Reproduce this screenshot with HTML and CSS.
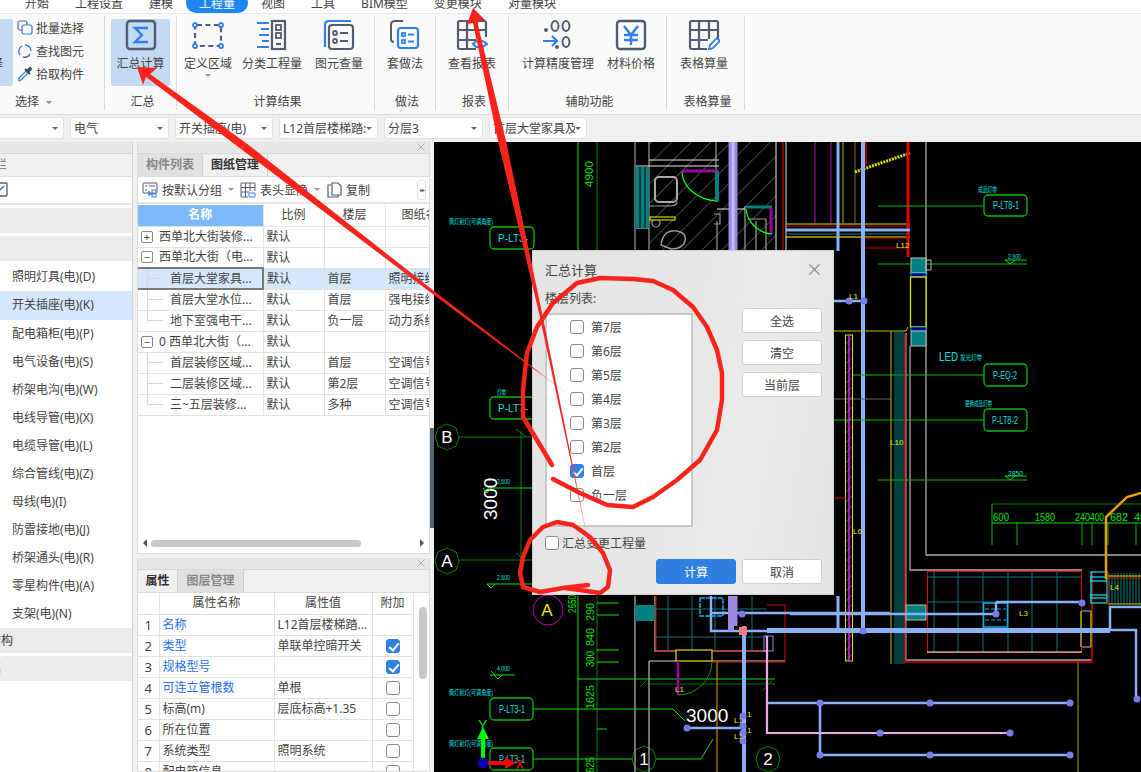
FILE: index.html
```html
<!DOCTYPE html>
<html lang="zh-CN">
<head>
<meta charset="utf-8">
<title>汇总计算</title>
<link rel="stylesheet" href="styles.css">
</head>
<body>
<div class="app">
  <nav class="tabs">
    <span class="tab">开始</span><span class="tab">工程设置</span><span class="tab">建模</span><span class="tab active">工程量</span><span class="tab">视图</span><span class="tab">工具</span><span class="tab">BIM模型</span><span class="tab">变更模块</span><span class="tab">对量模块</span>
  </nav>

  <section class="ribbon">
    <div class="group g-select">
      <div class="group-body">
        <div class="clip-btn"><span>择</span></div>
        <div class="small-list">
          <div class="small"><svg viewBox="0 0 16 16"><rect x="1" y="1" width="9" height="9" rx="2" fill="none" stroke="#5a6478" stroke-width="1.2"/><rect x="5" y="5" width="10" height="9" rx="2" fill="#fff" stroke="#2f80ed" stroke-width="1.2"/></svg>批量选择</div>
          <div class="small"><svg viewBox="0 0 16 16"><path d="M3 12A6 6 0 0 1 5 3M8 2a6 6 0 0 1 6 6" fill="none" stroke="#2f80ed" stroke-width="1.4"/><path d="M13 11a6 6 0 0 1-7 3" fill="none" stroke="#5a6478" stroke-width="1.4"/></svg>查找图元</div>
          <div class="small"><svg viewBox="0 0 16 16"><path d="M2 15l2-1 7-7-2-2-7 7z" fill="none" stroke="#2f80ed" stroke-width="1.2"/><path d="M8 3l5 5M10 5l3-3 1 1-3 3" fill="none" stroke="#3c4658" stroke-width="2"/></svg>拾取构件</div>
        </div>
      </div>
      <div class="group-label">选择<i class="caret label-caret"></i></div>
    </div>

    <div class="group g-sum">
      <div class="group-body">
        <div class="big selected w59">
          <svg class="icon" viewBox="0 0 32 32"><rect x="2" y="2" width="28" height="28" rx="3" fill="none" stroke="#525c70" stroke-width="2.4"/><path d="M23 9H10l7 7-7 7h13" fill="none" stroke="#2f80ed" stroke-width="2.4"/></svg>
          <span>汇总计算</span>
        </div>
      </div>
      <div class="group-label">汇总</div>
    </div>

    <div class="group g-result">
      <div class="group-body">
        <div class="big w60">
          <svg class="icon" viewBox="0 0 32 32"><rect x="3" y="6" width="26" height="21" rx="2" fill="none" stroke="#525c70" stroke-width="2.2" stroke-dasharray="5 3.4"/><g fill="#fff" stroke="#2f80ed" stroke-width="1.8"><circle cx="3" cy="6" r="2"/><circle cx="29" cy="6" r="2"/><circle cx="3" cy="27" r="2"/><circle cx="29" cy="27" r="2"/></g></svg>
          <span>定义区域</span><i class="caret big-caret"></i>
        </div>
        <div class="big w68">
          <svg class="icon" viewBox="0 0 32 32"><path d="M1 4h12M5 10h8M3 16h10M6 22h7M1 28h12" stroke="#2f80ed" stroke-width="2.2"/><rect x="16" y="2" width="13" height="28" fill="none" stroke="#525c70" stroke-width="2.2"/><g fill="none" stroke="#525c70" stroke-width="1.8"><rect x="20" y="6" width="5" height="5"/><rect x="20" y="14" width="5" height="5"/></g><path d="M20 25h5" stroke="#525c70" stroke-width="2.2"/></svg>
          <span>分类工程量</span>
        </div>
        <div class="big w66">
          <svg class="icon" viewBox="0 0 32 32"><path d="M2 28V6q0-4 4-4h22" fill="none" stroke="#2f80ed" stroke-width="2.2"/><rect x="6" y="6" width="24" height="24" rx="3" fill="none" stroke="#525c70" stroke-width="2.2"/><g fill="none" stroke="#525c70" stroke-width="1.8"><circle cx="12" cy="14" r="2"/><circle cx="12" cy="22" r="2"/><path d="M17 14h8M17 22h8"/></g></svg>
          <span>图元查量</span>
        </div>
      </div>
      <div class="group-label">计算结果</div>
    </div>

    <div class="group g-method">
      <div class="group-body">
        <div class="big w60">
          <svg class="icon" viewBox="0 0 32 32"><path d="M14 2H6Q2 2 2 6v14q0 3 3 3" fill="none" stroke="#525c70" stroke-width="2"/><rect x="9" y="9" width="20" height="20" rx="3" fill="none" stroke="#2f80ed" stroke-width="2.2"/><g fill="none" stroke="#2f80ed" stroke-width="1.8"><rect x="13" y="14" width="3" height="3"/><rect x="13" y="21" width="3" height="3"/><path d="M19 15.500h6M19 22.500h6"/></g></svg>
          <span>套做法</span>
        </div>
      </div>
      <div class="group-label">做法</div>
    </div>

    <div class="group g-report">
      <div class="group-body">
        <div class="big w60">
          <svg class="icon" viewBox="0 0 32 32"><path d="M20 30H4q-2 0-2-2V4q0-2 2-2h24q2 0 2 2v14M2 11h28M2 21h18M11 2v28M21 2v18" fill="none" stroke="#525c70" stroke-width="2.2"/><path d="M17 25q6-7 14 0q-8 7-14 0z" fill="#fff" stroke="#2f80ed" stroke-width="2"/></svg>
          <span>查看报表</span>
        </div>
      </div>
      <div class="group-label">报表</div>
    </div>

    <div class="group g-aux">
      <div class="group-body">
        <div class="big w86">
          <svg class="icon" viewBox="0 0 32 32"><g fill="none" stroke="#525c70" stroke-width="2"><ellipse cx="13" cy="7" rx="3.500" ry="5"/><ellipse cx="24" cy="7" rx="3.500" ry="5"/><ellipse cx="24" cy="23" rx="3.500" ry="5"/></g><circle cx="4" cy="11" r="2" fill="#525c70"/><circle cx="15" cy="28" r="2" fill="#525c70"/><path d="M1 22h14M10 17l5 5-5 5" fill="none" stroke="#2f80ed" stroke-width="2.200"/></svg>
          <span>计算精度管理</span>
        </div>
        <div class="big w60">
          <svg class="icon" viewBox="0 0 32 32"><rect x="2" y="2" width="28" height="28" rx="3" fill="none" stroke="#525c70" stroke-width="2.4"/><path d="M9 7l7 9 7-9M16 16v10M9 16h14M9 21h14" fill="none" stroke="#2f80ed" stroke-width="2.400"/></svg>
          <span>材料价格</span>
        </div>
      </div>
      <div class="group-label">辅助功能</div>
    </div>

    <div class="group g-table">
      <div class="group-body">
        <div class="big w60">
          <svg class="icon" viewBox="0 0 32 32"><path d="M19 30H4q-2 0-2-2V4q0-2 2-2h24q2 0 2 2v16M2 11h28M2 21h18M11 2v28M21 2v18" fill="none" stroke="#525c70" stroke-width="2.2"/><path d="M22 30l-1 0 1-4 7-7 3 3-7 7z" fill="#fff" stroke="#2f80ed" stroke-width="1.800"/></svg>
          <span>表格算量</span>
        </div>
      </div>
      <div class="group-label">表格算量</div>
    </div>
  </section>

  <section class="combos">
    <div class="combo c-first"><i class="caret"></i></div>
    <div class="combo"><span>电气</span><i class="caret"></i></div>
    <div class="combo"><span>开关插座(电)</span><i class="caret"></i></div>
    <div class="combo"><span>L12首层楼梯踏:</span><i class="caret"></i></div>
    <div class="combo"><span>分层3</span><i class="caret"></i></div>
    <div class="combo"><span>首层大堂家具及</span><i class="caret"></i></div>
  </section>

  <main class="main">
    <aside class="left">
      <div class="phead"></div>
      <div class="ltab"><span>导航栏</span></div>
      <div class="ltool"><svg width="8" height="15" viewBox="0 0 8 15"><path d="M-2 1h8q1 0 1 1v11q0 1-1 1h-8" fill="none" stroke="#525c70" stroke-width="1.300"/><path d="M0 8l4-4" stroke="#2f80ed" stroke-width="1.600"/></svg></div>
      <div class="lgroup"></div>
      <div class="lgroup"></div>
      <ul class="items">
        <li>照明灯具(电)(D)</li>
        <li class="sel">开关插座(电)(K)</li>
        <li>配电箱柜(电)(P)</li>
        <li>电气设备(电)(S)</li>
        <li>桥架电沟(电)(W)</li>
        <li>电线导管(电)(X)</li>
        <li>电缆导管(电)(L)</li>
        <li>综合管线(电)(Z)</li>
        <li>母线(电)(I)</li>
        <li>防雷接地(电)(J)</li>
        <li>桥架通头(电)(R)</li>
        <li>零星构件(电)(A)</li>
        <li>支架(电)(N)</li>
      </ul>
      <div class="lgroup lg2 lg3"><span>结构</span></div>
      <div class="lgroup lg2"><span>其</span></div>
    </aside>

    <div class="mid">
      <section class="panel panel-top">
        <div class="phead"><svg class="x" viewBox="0 0 8 8"><path d="M.5.500l7 7M7.500.500l-7 7" stroke="#aaa"/></svg></div>
        <div class="ptabs">
          <span class="ptab off w65">构件列表</span>
          <span class="ptab w65">图纸管理</span>
        </div>
        <div class="toolbar">
          <svg class="ti" viewBox="0 0 16 16"><rect x="1" y="1" width="14" height="10" rx="1" fill="none" stroke="#525c70"/><path d="M3 4h2M7 4h6M3 8h2" stroke="#525c70"/><path d="M7 9v5M7 12h4" stroke="#2f80ed" stroke-width="1.300"/><rect x="10" y="8" width="4" height="3" fill="#fff" stroke="#2f80ed"/><rect x="10" y="12" width="4" height="3" fill="#fff" stroke="#2f80ed"/></svg>
          <span>按默认分组</span><i class="caret t1"></i>
          <svg class="ti t2" viewBox="0 0 16 16"><path d="M1 1h14v8M1 1v14h7M1 5.500h14M1 10h8M5.500 1v14M10 1v8" fill="none" stroke="#525c70"/><path d="M9 11h6v4H9z" fill="#fff" stroke="#2f80ed"/></svg>
          <span>表头显隐</span><i class="caret t1"></i>
          <svg class="ti t2" viewBox="0 0 16 16"><path d="M5 3H2v12h10v-2" fill="none" stroke="#525c70" stroke-width="1.200"/><path d="M6 1h6l3 3v9H6z" fill="#fff" stroke="#525c70" stroke-width="1.200"/></svg>
          <span>复制</span>
          <span class="more">▸▸</span>
        </div>
        <div class="tbl-area">
          <table class="grid names">
            <colgroup><col class="cn1"><col class="cn2"><col class="cn2"><col class="cn2"></colgroup>
            <thead><tr><th class="hl">名称</th><th>比例</th><th>楼层</th><th class="clipcol">图纸名</th></tr></thead>
            <tbody>
              <tr><td class="root"><i class="tog">+</i>西单北大街装修...</td><td>默认</td><td></td><td></td></tr>
              <tr><td class="root"><i class="tog">−</i>西单北大街（电...</td><td>默认</td><td></td><td></td></tr>
              <tr class="cur"><td class="leaf focus">首层大堂家具...</td><td>默认</td><td>首层</td><td>照明接线</td></tr>
              <tr><td class="leaf">首层大堂水位...</td><td>默认</td><td>首层</td><td>强电接线</td></tr>
              <tr><td class="leaf last">地下室强电干...</td><td>默认</td><td>负一层</td><td>动力系统</td></tr>
              <tr><td class="root"><i class="tog">−</i>0 西单北大街（...</td><td>默认</td><td></td><td></td></tr>
              <tr><td class="leaf">首层装修区域...</td><td>默认</td><td>首层</td><td>空调信号</td></tr>
              <tr><td class="leaf">二层装修区域...</td><td>默认</td><td>第2层</td><td>空调信号</td></tr>
              <tr><td class="leaf last">三~五层装修...</td><td>默认</td><td>多种</td><td>空调信号</td></tr>
            </tbody>
          </table>
        </div>
        <div class="hscroll"><i class="arrow-l"></i><span class="thumb"></span><i class="arrow-r"></i></div>
      </section>

      <section class="panel panel-bot">
        <div class="phead"><svg class="x" viewBox="0 0 8 8"><path d="M.5.500l7 7M7.500.500l-7 7" stroke="#aaa"/></svg></div>
        <div class="ptabs">
          <span class="ptab w40">属性</span>
          <span class="ptab off w66">图层管理</span>
        </div>
        <div class="prop-wrap">
          <table class="grid props">
            <colgroup><col class="cp1"><col class="cp2"><col class="cp3"><col class="cp4"></colgroup>
            <thead><tr><th></th><th>属性名称</th><th>属性值</th><th>附加</th></tr></thead>
            <tbody>
              <tr><td class="num">1</td><td class="link">名称</td><td>L12首层楼梯踏...</td><td></td></tr>
              <tr><td class="num">2</td><td class="link">类型</td><td>单联单控暗开关</td><td class="cc"><i class="cb on"></i></td></tr>
              <tr><td class="num">3</td><td class="link">规格型号</td><td></td><td class="cc"><i class="cb on"></i></td></tr>
              <tr><td class="num">4</td><td class="link">可连立管根数</td><td>单根</td><td class="cc"><i class="cb"></i></td></tr>
              <tr><td class="num">5</td><td>标高(m)</td><td>层底标高+1.35</td><td class="cc"><i class="cb"></i></td></tr>
              <tr><td class="num">6</td><td>所在位置</td><td></td><td class="cc"><i class="cb"></i></td></tr>
              <tr><td class="num">7</td><td>系统类型</td><td>照明系统</td><td class="cc"><i class="cb"></i></td></tr>
              <tr><td class="num">8</td><td>配电箱信息</td><td></td><td class="cc"><i class="cb"></i></td></tr>
            </tbody>
          </table>
          <div class="vscroll"><span class="vthumb"></span></div>
        </div>
      </section>
    </div>

    <div class="canvas">
      <svg class="cad" width="707" height="631" viewBox="434 141 707 631">
        <defs>
          <pattern id="hatch" width="14" height="14" patternUnits="userSpaceOnUse" patternTransform="rotate(45)"><path d="M0 0V14" stroke="#8a8a8a" stroke-width="1"/></pattern>
          <pattern id="hatch2" width="7" height="7" patternUnits="userSpaceOnUse" patternTransform="rotate(45)"><path d="M0 0V7" stroke="#d050d0" stroke-width="1"/></pattern>
        </defs>
        <rect x="434" y="141" width="707" height="631" fill="#000"/>

        <!-- hatching and walls, upper middle -->
        <rect x="649" y="141" width="127" height="115" fill="url(#hatch)"/>
        <g fill="none" stroke="#9a9a9a" stroke-width="1.200">
          <path d="M635 141v115M649 141v115M716 141v60M717 220v30"/>
          <path d="M745 205v45M756 220v30M748 218h18v32"/>
          <rect x="655" y="176" width="22" height="25" rx="4" stroke="#aaa" stroke-width="2"/>
          <circle cx="656" cy="222" r="4"/>
          <path d="M661 244q2-16 16-14q10 2 8 10q-2 8-14 8z" stroke-width="1.400"/>
          <path d="M649 205h20q8 0 8-4M714 213h6v10h-6"/>
        </g>
        <path d="M649 159h70M649 165h70M636 165h13M636 227h13M717 208h28M776 141v110M786 141v110" stroke="#e8e8e8" fill="none"/>
        <rect x="635" y="166" width="14" height="61" fill="#008080"/>
        <path d="M640 166v61M645 166v61" stroke="#000"/>
        <rect x="650" y="216" width="25" height="3" fill="#000" stroke="#ff0"/>
        <path d="M783 141v110" stroke="#f00"/>
        <g fill="none" stroke="#0f0">
          <path d="M682 170a38 30 0 0 0 36 30" stroke-width="1.300"/>
          <path d="M746 208a28 28 0 0 0 26 25" stroke-width="1.300"/>
        </g>
        <path d="M682 170h36" stroke="#a000a0" stroke-width="3"/>
        <path d="M717 170v30" stroke="#008080" stroke-width="4"/>
        <path d="M746 206h26" stroke="#008080" stroke-width="3"/>
        <path d="M771 207v25" stroke="#a000a0" stroke-width="3"/>

        <!-- dimension lines left -->
        <g stroke="#00e000" fill="none">
          <path d="M578 141v109M578 595v177"/>
        </g>
        <g stroke="#008000" fill="none">
          <path d="M597 141v109M597 595v177"/>
          <path d="M459 436h73M459 559h73M521 430v135"/>
          <path d="M516 428l10 8M516 552l10 8"/>
        </g>
        <g stroke="#00e000" fill="none">
          <path d="M487 487h45M487 583h45M490 674h25M495 674l-4-4M578 678h197M490 708h183l12 12M533 758h168l12-20"/>
          <path d="M597 602h22M597 614h22M597 649h22M597 661h22M597 728h10"/>
        </g>
        <path d="M648 683h127M640 686l10-10M762 690l10-10" stroke="#007000" fill="none"/>

        <g lengthAdjust="spacingAndGlyphs">
        <text class="t-g" transform="translate(593 186) rotate(-90)" textLength="26" lengthAdjust="spacingAndGlyphs">4900</text>
        <text class="t-g" transform="translate(576 612) rotate(-90)" textLength="18" lengthAdjust="spacingAndGlyphs">2650</text>
        <text class="t-g" transform="translate(594 620) rotate(-90)" textLength="18" lengthAdjust="spacingAndGlyphs">290</text>
        <text class="t-g" transform="translate(594 645) rotate(-90)" textLength="18" lengthAdjust="spacingAndGlyphs">840</text>
        <text class="t-g" transform="translate(594 666) rotate(-90)" textLength="16" lengthAdjust="spacingAndGlyphs">300</text>
        <text class="t-g" transform="translate(594 708) rotate(-90)" textLength="24" lengthAdjust="spacingAndGlyphs">1625</text>
        <text class="t-g" transform="translate(594 772) rotate(-90)" textLength="16" lengthAdjust="spacingAndGlyphs">625</text>
        </g>
        <text class="t-w big-t" transform="translate(497 519) rotate(-90)">3000</text>
        <text class="t-w big-t" x="686" y="721">3000</text>

        <!-- grid axis bubbles -->
        <g fill="#000" stroke="#008000">
          <polygon points="447,423 456,427 459,436 456,445 447,449 438,445 435,436 438,427"/>
          <polygon points="447,547 456,551 459,560 456,569 447,573 438,569 435,560 438,551"/>
          <polygon points="644,745 653,749 656,758 653,767 644,771 635,767 632,758 635,749"/>
          <polygon points="768,745 777,749 780,758 777,767 768,771 759,767 756,758 759,749"/>
        </g>
        <text class="t-w axis" x="447" y="442">B</text>
        <text class="t-w axis" x="447" y="566">A</text>
        <text class="t-w axis" x="644" y="764">1</text>
        <text class="t-w axis" x="768" y="764">2</text>
        <circle cx="548" cy="609" r="15" fill="#000" stroke="#c000c0"/>
        <text class="t-y axis" x="547" y="615">A</text>

        <!-- tags -->
        <g fill="#000" stroke="#00c000" stroke-width="1.300">
          <rect x="490" y="226" width="44" height="22" rx="4"/>
          <rect x="490" y="396" width="44" height="22" rx="4"/>
          <rect x="490" y="697" width="43" height="22" rx="4"/>
          <rect x="490" y="747" width="43" height="22" rx="4"/>
          <rect x="984" y="194" width="43" height="21" rx="4"/>
          <rect x="984" y="363" width="43" height="22" rx="4"/>
          <rect x="984" y="408" width="43" height="22" rx="4"/>
        </g>
        <g class="t-c">
          <text x="498" y="241" textLength="30" lengthAdjust="spacingAndGlyphs">P-LT3-</text>
          <text x="498" y="411" textLength="30" lengthAdjust="spacingAndGlyphs">P-LT7-</text>
          <text x="499" y="712" textLength="26" lengthAdjust="spacingAndGlyphs">P-LT3-1</text>
          <text x="499" y="762" textLength="26" lengthAdjust="spacingAndGlyphs">P-LT3-1</text>
          <text x="993" y="208" textLength="26" lengthAdjust="spacingAndGlyphs">P-LT8-1</text>
          <text x="993" y="378" textLength="24" lengthAdjust="spacingAndGlyphs">P-EQ-2</text>
          <text x="992" y="423" textLength="26" lengthAdjust="spacingAndGlyphs">P-LT8-2</text>
        </g>
        <g class="t-c tiny">
          <text x="449" y="223" textLength="44" lengthAdjust="spacingAndGlyphs">筒灯射灯(可调角度)</text>
          <text x="497" y="394" textLength="9" lengthAdjust="spacingAndGlyphs">灯带</text>
          <text x="449" y="694" textLength="44" lengthAdjust="spacingAndGlyphs">筒灯射灯(可调角度)</text>
          <text x="449" y="745" textLength="44" lengthAdjust="spacingAndGlyphs">筒灯射灯(可调角度)</text>
          <text x="978" y="191" textLength="19" lengthAdjust="spacingAndGlyphs">成品灯带</text>
          <text x="965" y="405" textLength="27" lengthAdjust="spacingAndGlyphs">更换成品灯带</text>
          <text x="960" y="359" textLength="22" lengthAdjust="spacingAndGlyphs">发光灯带</text>
          <text x="1008" y="258" textLength="13" lengthAdjust="spacingAndGlyphs">2.900</text>
          <text x="497" y="483" textLength="13" lengthAdjust="spacingAndGlyphs">2.600</text>
          <text x="497" y="579" textLength="13" lengthAdjust="spacingAndGlyphs">2.600</text>
          <text x="497" y="670" textLength="13" lengthAdjust="spacingAndGlyphs">4.000</text>
          <text x="1008" y="475" textLength="15" lengthAdjust="spacingAndGlyphs">2850</text>
        </g>
        <text class="t-c led" x="939" y="360" textLength="19" lengthAdjust="spacingAndGlyphs">LED</text>
        <path d="M1005 259h22M1005 259l5 4 5-4M483 487l4 5 4-5M487 583l4 4 4-4M494 674l4 4 4-4M1005 475h22M1005 475l5 4 5-4" fill="none" stroke="#00e000"/>

        <!-- right column verticals -->
        <path d="M815 141v83M831 141v83" stroke="#c000c0"/>
        <path d="M855 141v83" stroke="#7a7a00"/>
        <path d="M843 141v83" stroke="#b0b000"/>
        <path d="M866 141v24" stroke="#c00000" stroke-width="1.500"/>
        <path d="M855 171l55-19" stroke="#e0e000" stroke-width="3" stroke-dasharray="2 1"/>
        <path d="M786 223h124" stroke="#909000" stroke-width="1.500"/>
        <path d="M786 225h124" stroke="#c00000"/>
        <path d="M786 233h124" stroke="#008080"/>
        <path d="M786 236h124" stroke="#ff0"/>
        <path d="M861 237h49M861 247h45M861 237v10" stroke="#d00000" fill="none"/>
        <path d="M908 141v115" stroke="#e00000" stroke-width="3"/>
        <path d="M926 141v413H1141M910 345v224H1082M926 141" stroke="#aaa" stroke-width="1.300" fill="none"/>
        <text class="t-y lbl" x="896" y="247">L12</text>
        <path d="M786 229h124" stroke="#8ab0f8" stroke-width="3"/>
        <path d="M838 141v109M838 595v34" stroke="#8ab0f8" stroke-width="3"/>
        <path d="M863 141v489" stroke="#8ab0f8" stroke-width="4"/>
        <path d="M834 300h32" stroke="#8ab0f8" stroke-width="2.500"/>
        <circle cx="849" cy="300" r="3.500" fill="#7a7ae8"/>
        <circle cx="864" cy="300" r="3.500" fill="#7a7ae8"/>
        <text class="t-y lbl" x="849" y="298">L1</text>

        <path d="M878 205h106M878 263h149M852 374h132M834 419h150M878 479h149" stroke="#00c000" fill="none"/>

        <!-- teal blocks and window -->
        <rect x="911" y="257" width="15" height="15" fill="#008080" stroke="#bbb"/>
        <rect x="926" y="259" width="5" height="10" fill="none" stroke="#bbb"/>
        <rect x="911" y="272" width="15" height="4" fill="#000090" stroke="#0ff" stroke-width=".5"/>
        <rect x="910.500" y="276" width="15.500" height="50" fill="#000" stroke="#e0e000" stroke-width="1.300"/>
        <rect x="911" y="326" width="15" height="4" fill="#000090" stroke="#0ff" stroke-width=".5"/>
        <rect x="911" y="330" width="15" height="15" fill="#008080" stroke="#bbb"/>
        <path d="M834 330h72l2-4" stroke="#c0c000" fill="none"/>
        <path d="M834 398h57" stroke="#666"/>
        <path d="M891 330v333" stroke="#c0c000"/>
        <path d="M895 330v333M897 330v333M899 330v333M901 330v333M903 330v333" stroke="#008080"/>
        <path d="M904.500 332v331" stroke="#c00000" stroke-width="1.500"/>
        <path d="M906 332v328" stroke="#999" stroke-width="1.200"/>
        <rect x="845.500" y="334" width="7" height="326" fill="url(#hatch2)" stroke="#e0e000"/>
        <path d="M849 334v326" stroke="#ff30ff" stroke-width="1.300"/>
        <text class="t-y lbl" x="853" y="533">L6</text>
        <text class="t-y lbl" x="890" y="444">L10</text>
        <path d="M834 497h12" stroke="#d00000"/>

        <!-- lower right room -->
        <path d="M905 661H1092V570" stroke="#d00000" fill="none" stroke-width="1.500"/>
        <path d="M907 659H1091" stroke="#aaa" fill="none" stroke-width="1.300"/>
        <g stroke="#107070" fill="none">
          <path d="M934 571v80M958 571v80M983 571v80M1008 571v80M1032 571v80M1057 571v80M927 576h155M927 601h155M927 631h155"/>
        </g>
        <rect x="927.500" y="570.500" width="154" height="81" fill="none" stroke="#e00000"/>
        <path d="M927 651h155" stroke="#eee"/>
        <rect x="983.500" y="602" width="24" height="24" fill="none" stroke="#00b0e8" stroke-width="1.500"/>
        <path d="M985 608h21M985 619h21" stroke="#00b0e8" stroke-dasharray="4 2"/>
        <rect x="906" y="604" width="20" height="15" fill="#008080" stroke="#bbb"/>
        <path d="M1082 610h9v36h-9" fill="none" stroke="#bbb"/>
        <path d="M1081 610v36M1091 610v36" stroke="#8a8a00" stroke-width="2"/>
        <g fill="none" stroke="#00d8e8" stroke-width="1.300">
          <rect x="1091" y="571" width="16" height="31"/>
          <rect x="1091" y="576" width="16" height="4"/>
          <rect x="1091" y="594" width="16" height="3"/>
        </g>
        <path d="M1109 572v31M1112 572v31M1115 572v31M1118 572v31M1121 572v31M1124 572v31M1127 572v31M1130 572v31M1133 572v31M1136 572v31M1139 572v31" stroke="#008080"/>
        <path d="M1108 577h33" stroke="#e00000"/><path d="M1108 603h33M1108 575h33" stroke="#d0d000"/>
        <path d="M1108 570v33" stroke="#d00000"/>
        <text class="t-y lbl" x="1110" y="589">L4</text>
        <text class="t-y lbl" x="1019" y="615">L3</text>

        <path d="M992 503H1141" stroke="#008000"/>
        <path d="M992 522H1141" stroke="#00e000"/>
        <path d="M992 503v41M1017 521v23M1082 521v23M1092 521v23M1108 521v23M1136 521v23" stroke="#00b000"/>
        <g class="t-g dim">
          <text x="993" y="520" textLength="16" lengthAdjust="spacingAndGlyphs">600</text>
          <text x="1035" y="520" textLength="20" lengthAdjust="spacingAndGlyphs">1580</text>
          <text x="1075" y="520" textLength="15" lengthAdjust="spacingAndGlyphs">240</text>
          <text x="1090" y="520" textLength="14" lengthAdjust="spacingAndGlyphs">400</text>
          <text x="1110" y="520" textLength="18" lengthAdjust="spacingAndGlyphs">682</text>
          <text x="1134" y="520">45</text>
        </g>
        <path d="M1106 578v-62l21-20 14-4" stroke="#e8a000" stroke-width="2.500" fill="none"/>

        <!-- lower-middle room -->
        <path d="M635 595v177M655 595v55H767M649 660v112" stroke="#aaa" stroke-width="1.300" fill="none"/>
        <path d="M649 660h27M712 660h73" stroke="#ccc" fill="none"/>
        <rect x="635" y="604" width="20" height="16" fill="#008080"/>
        <path d="M656 595v55h110M767 604h18v57H712" fill="none" stroke="#e00000"/>
        <path d="M656 608h110M656 636h110M668 595v55M692 595v55M715 595v55M752 595v55" stroke="#107070" fill="none"/>
        <rect x="676" y="649" width="36" height="11" fill="#000" stroke="#d0d000" stroke-width="1.300"/>
        <path d="M678 660v34" stroke="#a000a0" stroke-width="2.500"/>
        <path d="M678 694a34 34 0 0 0 34-34" stroke="#00a000" fill="none"/>
        <path d="M717 660v112" stroke="#e8a000"/>
        <path d="M1078 661v111" stroke="#a0a000"/>
        <text class="t-y lbl" x="675" y="691">L1</text>
        <rect x="700" y="597" width="23" height="18" fill="none" stroke="#00b0e8" stroke-width="1.500" stroke-dasharray="5 1"/>

        <!-- blue routes -->
        <g fill="none" stroke="#8ab0f8">
          <path d="M711 595v35h160M712 612h178" stroke-width="2.500"/>
          <path d="M744 625v147" stroke-width="4"/>
          <path d="M687 727h56" stroke-width="2.500"/>
          <path d="M790 613h206M996 601h86M996 601v12" stroke-width="2.500"/>
          <path d="M767 629H1110V606H1141M1110 629h26v69" stroke-width="2.500"/>
          <path d="M767 629.500h343" stroke-width="5"/>
          <path d="M767 702h303M820 702v52h250" stroke-width="2.500"/>
        </g>
        <path d="M731 595v35" stroke="#9c88e0" stroke-width="6"/>
        <path d="M733 141v109M733 595v30" stroke="#9c88e0" stroke-width="9"/>
        <path d="M733 141v109" stroke="#c8bcf4" stroke-width="3"/>
        <rect x="739" y="626" width="8" height="8" fill="#ff7a7a"/>
        <rect x="764" y="635" width="9" height="15" fill="none" stroke="#9c88e0"/>
        <path d="M767 635v97h243" fill="none" stroke="#f0a8e8" stroke-width="2.200"/>
        <g fill="#7a7ae8">
          <circle cx="687" cy="727" r="3.500"/>
          <circle cx="743" cy="715" r="3.500"/><circle cx="743" cy="725" r="3.500"/><circle cx="743" cy="732" r="3.500"/><circle cx="743" cy="740" r="3.500"/>
          <circle cx="742" cy="613" r="3.500"/><circle cx="863" cy="630" r="3.500"/>
          <circle cx="996" cy="613" r="3.500"/><circle cx="1082" cy="602" r="3.500"/><circle cx="1137" cy="698" r="3.500"/>
          <circle cx="820" cy="702" r="3.500"/><circle cx="930" cy="702" r="3.500"/><circle cx="1070" cy="702" r="3.500"/>
          <circle cx="820" cy="754" r="3.500"/><circle cx="930" cy="754" r="3.500"/><circle cx="1070" cy="754" r="3.500"/>
          <circle cx="880" cy="732" r="3.500"/><circle cx="1010" cy="732" r="3.500"/>
        </g>
        <g class="t-y lbl">
          <text x="734" y="722">L1</text><text x="734" y="738">L1</text><text x="747" y="716">1</text><text x="747" y="732">1</text>
        </g>

        <!-- UCS axes -->
        <path d="M483 760v-30" stroke="#0f0" stroke-width="4"/>
        <path d="M477 738l6-12 6 12z" fill="#0f0"/>
        <text class="t-g ucs" x="478" y="729">Y</text>
        <path d="M488 762h20" stroke="#f00" stroke-width="4"/>
        <path d="M505 756l11 6-11 6z" fill="#f00"/>
        <circle cx="483" cy="762" r="5.500" fill="#0000b0"/>
        <text class="t-r ucs" x="515" y="768">X</text>
      </svg>
    </div>
  </main>

  <div class="handle"></div>

  <div class="dialog">
    <div class="dlg-title"><span>汇总计算</span><svg class="dlg-x" viewBox="0 0 11 11"><path d="M.5.500l10 10M10.500.500l-10 10" stroke="#8a8a8a" stroke-width="1.100"/></svg></div>
    <div class="dlg-sub">楼层列表:</div>
    <div class="dlg-body">
      <div class="floors">
        <label class="floor"><i class="cb"></i>第7层</label>
        <label class="floor"><i class="cb"></i>第6层</label>
        <label class="floor"><i class="cb"></i>第5层</label>
        <label class="floor"><i class="cb"></i>第4层</label>
        <label class="floor"><i class="cb"></i>第3层</label>
        <label class="floor"><i class="cb"></i>第2层</label>
        <label class="floor"><i class="cb on"></i>首层</label>
        <label class="floor"><i class="cb"></i>负一层</label>
      </div>
      <div class="dlg-side">
        <button class="btn">全选</button>
        <button class="btn">清空</button>
        <button class="btn">当前层</button>
      </div>
    </div>
    <label class="dlg-check"><i class="cb"></i>汇总变更工程量</label>
    <div class="dlg-foot">
      <button class="btn primary">计算</button>
      <button class="btn">取消</button>
    </div>
  </div>

  <svg class="marks" width="1141" height="772" viewBox="0 0 1141 772">
    <defs>
      <linearGradient id="fadeA" gradientUnits="userSpaceOnUse" x1="434" y1="293" x2="578" y2="402">
        <stop offset="0" stop-color="#f8241c"/><stop offset=".68" stop-color="#f8241c"/><stop offset=".78" stop-color="#f8a0a0"/><stop offset="1" stop-color="#f8c8c8" stop-opacity=".3"/>
      </linearGradient>
      <linearGradient id="fadeB" gradientUnits="userSpaceOnUse" x1="541" y1="313" x2="592" y2="565">
        <stop offset="0" stop-color="#f8241c"/><stop offset=".55" stop-color="#f8241c"/><stop offset=".8" stop-color="#f87a70"/><stop offset="1" stop-color="#f0c0b8" stop-opacity=".3"/>
      </linearGradient>
    </defs>
    <polygon points="137,67 157,68 150,74 246,143 241,149 146,77 143,85" fill="#f8241c"/>
    <polygon points="246,143 434,291 434,295 241,149" fill="#f8241c"/>
    <polygon points="434,291 578,402 434,295" fill="url(#fadeA)"/>
    <polygon points="473,8 485,20 477,21 506,141 498,141 473,23 467,24" fill="#f8241c"/>
    <polygon points="506,141 542,313 539,313 498,141" fill="#f8241c"/>
    <polygon points="542,313 593,565 539,313" fill="url(#fadeB)"/>
    <path class="stroke1" d="M552 465L537 440L523 417L523 390L527 353L537 327L553 303L577 283L600 278L633 279L653 281L673 290L693 307L707 327L717 350L722 373L722 400L717 430L700 460L677 480L653 497L633 507L607 505L580 493L553 479"/>
    <path class="stroke1" d="M588 585L563 588L540 592L523 587L520 573L523 557L530 540L543 527L557 522L573 525L590 537L603 553L610 570L608 587L600 593L580 590L565 588"/>
  </svg>
</div>
</body>
</html>
```
FILE: styles.css
```css
* { box-sizing: border-box; }
html, body { margin: 0; padding: 0; }
body {
  font-family: "Noto Sans", "Noto Sans CJK SC", sans-serif;
  font-size: 12px;
  color: #3a3a3a;
}
i { font-style: normal; }
ul { list-style: none; margin: 0; padding: 0; }

.app {
  position: relative;
  width: 1141px;
  height: 772px;
  overflow: hidden;
  display: flex;
  flex-direction: column;
  background: #efefef;
}

/* top tabs */
.tabs {
  display: flex;
  height: 14px;
  padding-left: 12px;
  overflow: hidden;
  background: #fff;
  border-bottom: 1px solid #e8e8e8;
  flex: none;
}
.tab {
  height: 20px;
  margin-top: -7px;
  padding: 0 13px;
  line-height: 22px;
  font-size: 12px;
  color: #444;
  white-space: nowrap;
}
.tab.active { background: #1e86f0; color: #fff; border-radius: 10px; }

/* ribbon */
.ribbon {
  display: flex;
  height: 101px;
  background: #fafafa;
  border-bottom: 1px solid #dcdcdc;
  flex: none;
}
.group {
  display: flex;
  flex-direction: column;
  height: 94px;
  margin-top: 2px;
  border-right: 1px solid #dadada;
  flex: none;
}
.group-body { display: flex; height: 70px; padding-top: 3px; }
.group-label { text-align: center; line-height: 16px; height: 16px; margin-top: 8px; padding-left: 4px; color: #444; }
.g-select { width: 105px; }
.g-select .group-label { text-align: left; padding-left: 15px; }
.g-sum { width: 72px; }
.g-sum .group-body { padding-left: 6px; }
.g-result { width: 198px; }
.g-result .group-body { padding-left: 1px; }
.g-method { width: 61px; }
.g-report { width: 73px; }
.g-method .group-body, .g-report .group-body { justify-content: center; }
.g-aux { width: 158px; }
.g-aux .group-body { padding-left: 6px; }
.g-table { width: 78px; }
.g-table .group-body { padding-left: 7px; }

.big {
  display: flex;
  flex-direction: column;
  align-items: center;
  height: 67px;
  white-space: nowrap;
}
.big .icon { width: 32px; height: 32px; margin-bottom: 5px; flex: none; }
.big span { line-height: 16px; color: #444; }
.big.selected { background: #c3daf2; border-radius: 2px; }
.w59 { width: 59px; }
.w60 { width: 60px; }
.w68 { width: 68px; }
.w66 { width: 66px; }
.w86 { width: 86px; }
.w65 { width: 65px; }
.w40 { width: 40px; }

.clip-btn {
  width: 13px;
  height: 67px;
  background: #c3daf2;
  border-radius: 0 3px 3px 0;
  overflow: hidden;
  padding-top: 37px;
  line-height: 16px;
  text-indent: -9px;
  flex: none;
}
.small-list { padding: 0 0 0 4px; display: flex; flex-direction: column; gap: 7px; margin-top: 1px; }
.small { display: flex; align-items: center; gap: 3px; height: 16px; color: #444; white-space: nowrap; }
.small svg { width: 16px; height: 16px; flex: none; }

.caret {
  display: inline-block;
  width: 0;
  height: 0;
  border-left: 3px solid transparent;
  border-right: 3px solid transparent;
  border-top: 3px solid #666;
}
.label-caret { margin-left: 7px; vertical-align: 2px; border-top-color: #888; }
.big-caret { margin-top: 2px; border-top-color: #888; }

/* combo row */
.combos {
  display: flex;
  gap: 6px;
  height: 26px;
  padding: 2px 0 0 0;
  flex: none;
  background: #f0f0f0;
}
.combo {
  display: flex;
  align-items: center;
  justify-content: space-between;
  width: 98px;
  height: 22px;
  padding: 0 5px 0 3px;
  background: #fff;
  border: 1px solid #e2e2e2;
  border-radius: 3px;
  white-space: nowrap;
  overflow: hidden;
  color: #444;
}
.combo span { overflow: hidden; }
.c-first { width: 64px; justify-content: flex-end; border-left: 0; border-radius: 0 3px 3px 0; }
.combo:nth-child(2), .combo:nth-child(4), .combo:nth-child(5) { width: 99px; }

/* main area */
.main { display: flex; flex: 1; min-height: 0; padding-top: 1px; background: #f0f0f0; }

.phead {
  position: relative;
  height: 12px;
  background: #e7e7e7;
  border-bottom: 1px solid #d8d8d8;
  flex: none;
}
.x { position: absolute; right: 4px; top: 1px; width: 8px; height: 8px; }

/* left navigation */
.left {
  width: 133px;
  background: #fff;
  border-right: 1px solid #d4d4d4;
  overflow: hidden;
  flex: none;
}
.ltab {
  height: 23px;
  line-height: 22px;
  text-indent: -29px;
  white-space: nowrap;
  background: #f0f0f0;
  color: #777;
  border-bottom: 1px solid #e2e2e2;
}
.ltool { height: 28px; padding-top: 5px; background: #fff; border-bottom: 2px solid #e6e6e6; }
.ltool svg { display: block; }
.lgroup { height: 25px; margin: 3px 0 0; background: #ececec; line-height: 25px; }
.lg2 { white-space: nowrap; text-indent: -11px; }
.lg3 { margin-top: 0; }
.items { padding: 2px 0 0; }
.items li { height: 28px; line-height: 28px; padding-left: 12px; color: #444; white-space: nowrap; font-size: 12px; }
.items li.sel { height: 29px; background: #d5e7fa; }

/* middle column */
.mid { width: 293px; margin-left: 4px; display: flex; flex-direction: column; flex: none; }
.panel { background: #fff; border: 1px solid #dcdcdc; border-top: 0; display: flex; flex-direction: column; overflow: hidden; }
.panel-top { height: 412px; flex: none; }
.panel-bot { flex: 1; margin-top: 4px; min-height: 0; }

.ptabs { display: flex; height: 23px; background: #f0f0f0; border-bottom: 1px solid #dcdcdc; flex: none; }
.ptab { line-height: 22px; text-align: center; font-weight: 700; color: #333; border-right: 1px solid #cfcfcf; }
.ptab.off { background: #e0e0e0; color: #888; }

.toolbar {
  display: flex;
  align-items: center;
  height: 27px;
  border-bottom: 2px solid #e6e6e6;
  padding-left: 4px;
  flex: none;
  white-space: nowrap;
  color: #444;
}
.ti { width: 16px; height: 16px; margin-right: 4px; flex: none; }
.t1 { margin: 0 0 0 6px; border-top-color: #999; }
.t2 { margin-left: 6px; }
.more {
  margin-left: auto;
  margin-right: 3px;
  width: 9px;
  height: 20px;
  border: 1px solid #e2e2e2;
  border-radius: 3px;
  font-size: 6px;
  line-height: 18px;
  text-align: center;
  letter-spacing: -1px;
  color: #555;
}

.tbl-area { flex: 1; overflow: hidden; min-height: 0; padding-top: 1px; }
.grid { border-collapse: collapse; table-layout: fixed; color: #444; }
.grid th, .grid td {
  height: 21px;
  padding: 0 3px;
  border: 1px solid #e2e2e2;
  font-weight: 400;
  line-height: 18px;
  white-space: nowrap;
  overflow: hidden;
}
.grid tr > :first-child { border-left: 0; }
.grid thead th { border-top: 0; }
.names { width: 308px; }
.cn1 { width: 125px; }
.cn2 { width: 61px; }
.names th { text-align: center; }
.names th.clipcol { text-align: left; padding-left: 16px; }
.names th.hl { background: #7db9fa; color: #fff; font-weight: 700; }
.root { padding-left: 3px !important; }
.tog {
  display: inline-block;
  width: 12px;
  height: 12px;
  margin-right: 6px;
  border: 1px solid #888;
  border-radius: 2px;
  font-size: 11px;
  line-height: 10px;
  text-align: center;
}
.leaf {
  padding-left: 32px !important;
  background:
    linear-gradient(#d8d8d8, #d8d8d8) 9px 50%/16px 1px no-repeat,
    linear-gradient(#d8d8d8, #d8d8d8) 9px 0/1px 100% no-repeat;
}
.leaf.last {
  background:
    linear-gradient(#d8d8d8, #d8d8d8) 9px 50%/16px 1px no-repeat,
    linear-gradient(#d8d8d8, #d8d8d8) 9px 0/1px 50% no-repeat;
}
.cur td { background-color: #d5e7fa; }
.grid .focus { border: 2px solid #7a7a7a; }

.hscroll { display: flex; align-items: center; height: 16px; padding: 0 5px 4px; flex: none; }
.thumb { width: 210px; height: 7px; margin-left: 4px; background: #c8c8c8; border-radius: 4px; }
.arrow-l, .arrow-r { width: 0; height: 0; border-top: 4px solid transparent; border-bottom: 4px solid transparent; }
.arrow-l { border-right: 4px solid #555; }
.arrow-r { border-left: 4px solid #555; margin-left: auto; }

.prop-wrap { display: flex; flex: 1; min-height: 0; overflow: hidden; }
.props { width: 275px; flex: none; align-self: flex-start; }
.cp1 { width: 21px; }
.cp2 { width: 115px; }
.cp3 { width: 98px; }
.cp4 { width: 41px; }
.props th { text-align: center; }
.props .num { text-align: center; font-size: 13px; padding: 0; }
.link { color: #2a6ff0; }
.cc { text-align: center; padding: 0 !important; }
.vscroll { flex: 1; padding: 14px 0 0 5px; }
.vthumb { display: block; width: 8px; height: 72px; background: #c8c8c8; border-radius: 4px; }

.cb {
  display: inline-block;
  position: relative;
  width: 14px;
  height: 14px;
  background: #fff;
  border: 1px solid #8a8a8a;
  border-radius: 3px;
  vertical-align: middle;
  flex: none;
}
.cb.on { background: #2f80e4; border-color: #2f80e4; }
.cb.on::after {
  content: "";
  position: absolute;
  left: 4px;
  top: 1px;
  width: 4px;
  height: 8px;
  border: solid #fff;
  border-width: 0 2px 2px 0;
  transform: rotate(40deg);
}

/* CAD */
.canvas { flex: 1; min-width: 0; background: #000; margin-left: 4px; overflow: hidden; }
.cad { display: block; }
.cad text { font-family: "Liberation Sans", "Noto Sans CJK SC", sans-serif; }
.t-g { fill: #00e000; font-size: 10px; }
.t-w { fill: #fff; }
.t-y { fill: #e8e800; }
.t-r { fill: #f00; }
.t-c { fill: #00e0e0; font-size: 10px; }
.tiny { font-size: 7px; }
.led { font-size: 12px; }
.big-t { font-size: 19px; }
.axis { font-size: 17px; text-anchor: middle; }
.lbl { font-size: 8px; }
.dim { font-size: 11px; }
.ucs { font-size: 14px; }

/* collapse handle between panels and drawing */
.handle {
  position: absolute;
  left: 430px;
  top: 428px;
  width: 4px;
  height: 100px;
  background: #5a6470;
}

/* dialog */
.dialog {
  position: absolute;
  left: 532px;
  top: 250px;
  width: 302px;
  height: 345px;
  padding: 8px 11px 10px 12px;
  display: flex;
  flex-direction: column;
  background: linear-gradient(100deg, #e3e4e3 0%, #e6e7e6 50%, #ebebed 68%, #e2e3e3 100%);
  border: 1px solid #cfcfcf;
  color: #444;
}
.dlg-title { display: flex; justify-content: space-between; align-items: center; height: 20px; font-size: 13px; flex: none; }
.dlg-x { width: 11px; height: 11px; margin-right: 2px; }
.dlg-sub { margin-top: 11px; line-height: 18px; flex: none; }
.dlg-body { display: flex; margin-top: 5px; height: 214px; flex: none; }
.floors {
  width: 148px;
  height: 214px;
  background: #fff;
  border: 2px solid #c8c8c8;
  flex: none;
}
.floor { display: flex; align-items: center; height: 24px; padding-left: 23px; gap: 7px; }
.dlg-side { display: flex; flex-direction: column; gap: 7px; margin-left: 49px; margin-top: -5px; }
.btn {
  width: 80px;
  height: 25px;
  padding: 0;
  background: #fff;
  border: 1px solid #d0d0d0;
  border-radius: 3px;
  font: inherit;
  color: #444;
}
.btn.primary { background: #2f7fe0; border-color: #2f7fe0; color: #fff; }
.dlg-check { display: flex; align-items: center; gap: 3px; margin-top: 8px; height: 16px; white-space: nowrap; flex: none; }
.dlg-foot { display: flex; justify-content: flex-end; gap: 6px; margin-top: auto; }

/* red hand annotations */
.marks { position: absolute; left: 0; top: 0; pointer-events: none; }
.stroke1 { fill: none; stroke: #f8241c; stroke-width: 4.5; stroke-linejoin: round; stroke-linecap: round; }
```
